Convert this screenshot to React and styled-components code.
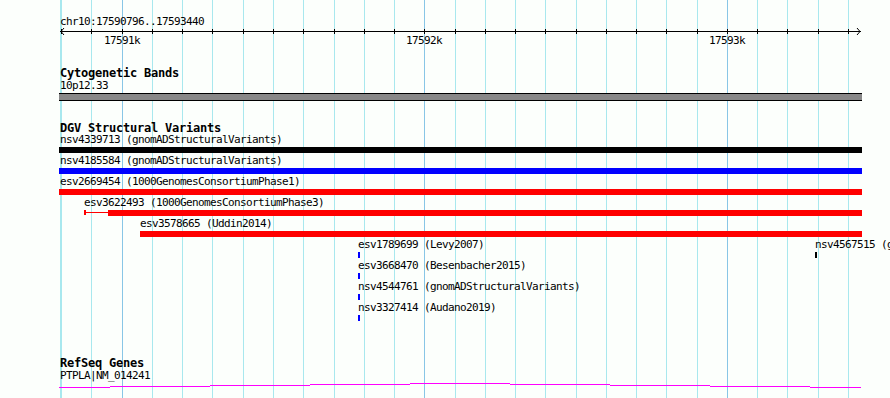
import React from 'react'
import styled, { createGlobalStyle } from 'styled-components'

const START = 17590796
const END = 17593440
const toX = bp => 60 + (bp - START) * 800 / (END - START)
const LEFT = 59
const RIGHT = 862

const gridBps = []
for (let bp = 17590800; bp <= 17593400; bp += 100) gridBps.push(bp)
const majorBps = [17591000, 17592000, 17593000]

const cytoRow = { label: '10p12.33', start: 17500000, end: 17700000 }

const dgvRows = [
  [{ label: 'nsv4339713 (gnomADStructuralVariants)', start: 17580000, end: 17600000, color: '#000' }],
  [{ label: 'nsv4185584 (gnomADStructuralVariants)', start: 17580000, end: 17600000, color: '#0000ff' }],
  [{ label: 'esv2669454 (1000GenomesConsortiumPhase1)', start: 17580000, end: 17600000, color: '#ff0000' }],
  [{ label: 'esv3622493 (1000GenomesConsortiumPhase3)', start: 17590875, thick: 17590955, end: 17600000, color: '#ff0000' }],
  [{ label: 'esv3578665 (Uddin2014)', start: 17591060, end: 17600000, color: '#ff0000' }],
  [
    { label: 'esv1789699 (Levy2007)', start: 17591781, end: 17591787, color: '#0000ff' },
    { label: 'nsv4567515 (gnomADStructuralVariants)', start: 17593291, end: 17593297, color: '#000' },
  ],
  [{ label: 'esv3668470 (Besenbacher2015)', start: 17591781, end: 17591787, color: '#0000ff' }],
  [{ label: 'nsv4544761 (gnomADStructuralVariants)', start: 17591781, end: 17591787, color: '#0000ff' }],
  [{ label: 'nsv3327414 (Audano2019)', start: 17591781, end: 17591787, color: '#0000ff' }],
]

// intron line of PTPLA, drawn as small steps
const geneSteps = [
  [59, 110, 4], [110, 210, 3], [210, 310, 2], [310, 410, 1], [410, 510, 0],
  [510, 610, 1], [610, 710, 2], [710, 810, 3], [810, 861, 4],
]

const GlobalStyle = createGlobalStyle`
  html, body {
    margin: 0;
    padding: 0;
    background: #fcfffc;
    overflow: hidden;
  }
`

const Browser = styled.div`
  position: relative;
  width: 890px;
  height: 398px;
  overflow: hidden;
  background: #fcfffc;
  color: #000;
  font-family: "DejaVu Sans Mono", "Liberation Mono", monospace;
`

const Grid = styled.svg`
  position: absolute;
  top: 0;
  left: 0;
`

const Tracks = styled.div`
  position: relative;
`

const Ruler = styled.svg`
  display: block;
`

const RulerText = styled.text`
  font-family: "DejaVu Sans Mono", "Liberation Mono", monospace;
  font-size: 11px;
  letter-spacing: -0.62px;
  fill: #000;
`

const Track = styled.section`
  padding-top: ${p => p.$gap}px;
`

const TrackTitle = styled.div`
  height: 12px;
  padding-left: 60px;
  font-size: 12px;
  font-weight: bold;
  letter-spacing: -0.22px;
  line-height: 10px;
  white-space: nowrap;
`

const Row = styled.div`
  position: relative;
  height: ${p => p.$h}px;
  margin-top: ${p => p.$top || 0}px;
`

const Feature = styled.div`
  position: absolute;
  top: 0;
  left: 0;
  right: 0;
`

const Label = styled.div`
  height: 11px;
  font-size: 11px;
  letter-spacing: -0.62px;
  line-height: 9px;
  white-space: nowrap;
`

const Glyph = styled.div`
  display: flex;
  align-items: flex-start;
  margin-top: 1px;
  height: 6px;
`

const Bar = styled.div`
  height: 6px;
  background: ${p => p.$color};
  flex: none;
`

const BandBar = styled.div`
  height: 6px;
  margin-top: 1px;
  background: #888888;
  border-top: 1px solid #000;
  border-bottom: 1px solid #000;
`

const Cap = styled.div`
  width: 2px;
  height: 5px;
  background: ${p => p.$color};
  flex: none;
`

const Stem = styled.div`
  height: 1px;
  margin-top: 2px;
  background: ${p => p.$color};
  flex: none;
`

const GeneLine = styled.svg`
  display: block;
  margin-top: 1px;
`

function GridLines() {
  return (
    <Grid width="890" height="398">
      <line x1="60.5" y1="0" x2="60.5" y2="398" stroke="#a8e8ee" />
      {gridBps.map(bp => {
        const x = Math.round(toX(bp)) + 0.5
        const major = majorBps.includes(bp)
        return (
          <line key={bp} x1={x} y1="0" x2={x} y2="398" stroke={major ? '#88c6e6' : '#a8e8ee'} />
        )
      })}
    </Grid>
  )
}

function RulerTrack() {
  return (
    <Ruler width="890" height="68">
      <RulerText x="60" y="25">chr10:17590796..17593440</RulerText>
      <line x1="60" y1="31.5" x2="861" y2="31.5" stroke="#000" />
      <polyline points="64,28 61,31.5 64,35" fill="none" stroke="#000" />
      <polyline points="857,28 860,31.5 857,35" fill="none" stroke="#000" />
      {gridBps.map(bp => {
        const x = Math.round(toX(bp)) + 0.5
        return <line key={bp} x1={x} y1="29" x2={x} y2="34" stroke="#000" />
      })}
      {majorBps.map(bp => (
        <RulerText key={bp} x={Math.round(toX(bp))} y="44" textAnchor="middle">
          {bp / 1000}k
        </RulerText>
      ))}
    </Ruler>
  )
}

function SvFeature({ f }) {
  const x0 = Math.max(Math.round(toX(f.start)), LEFT)
  const x1 = Math.min(Math.round(toX(f.end)), RIGHT)
  const labelX = Math.max(x0, 60)
  if (f.thick) {
    const xt = Math.round(toX(f.thick))
    return (
      <Feature>
        <Label style={{ marginLeft: labelX }}>{f.label}</Label>
        <Glyph style={{ marginLeft: x0 }}>
          <Cap $color={f.color} />
          <Stem $color={f.color} style={{ width: xt - x0 - 2 }} />
          <Bar $color={f.color} style={{ width: x1 - xt }} />
        </Glyph>
      </Feature>
    )
  }
  return (
    <Feature>
      <Label style={{ marginLeft: labelX }}>{f.label}</Label>
      <Glyph style={{ marginLeft: x0 }}>
        <Bar $color={f.color} style={{ width: Math.max(x1 - x0, 2) }} />
      </Glyph>
    </Feature>
  )
}

export default function App() {
  return (
    <Browser>
      <GlobalStyle />
      <GridLines />
      <Tracks>
        <RulerTrack />

        <Track $gap={0}>
          <TrackTitle>Cytogenetic Bands</TrackTitle>
          <Row $h={20} $top={1}>
            <Label style={{ marginLeft: 60 }}>{cytoRow.label}</Label>
            <BandBar style={{ marginLeft: LEFT, width: RIGHT - LEFT }} />
          </Row>
        </Track>

        <Track $gap={22}>
          <TrackTitle>DGV Structural Variants</TrackTitle>
          {dgvRows.map((row, i) => (
            <Row key={i} $h={21}>
              {row.map(f => <SvFeature key={f.label} f={f} />)}
            </Row>
          ))}
        </Track>

        <Track $gap={34}>
          <TrackTitle>RefSeq Genes</TrackTitle>
          <Row $h={18} $top={1}>
            <Label style={{ marginLeft: 60 }}>PTPLA|NM_014241</Label>
            <GeneLine width="890" height="6">
              <path
                d={geneSteps.map(([a, b, y]) => `M${a} ${y + 0.5}H${b}`).join('')}
                stroke="#ff00ff"
                fill="none"
                shapeRendering="crispEdges"
              />
            </GeneLine>
          </Row>
        </Track>
      </Tracks>
    </Browser>
  )
}
